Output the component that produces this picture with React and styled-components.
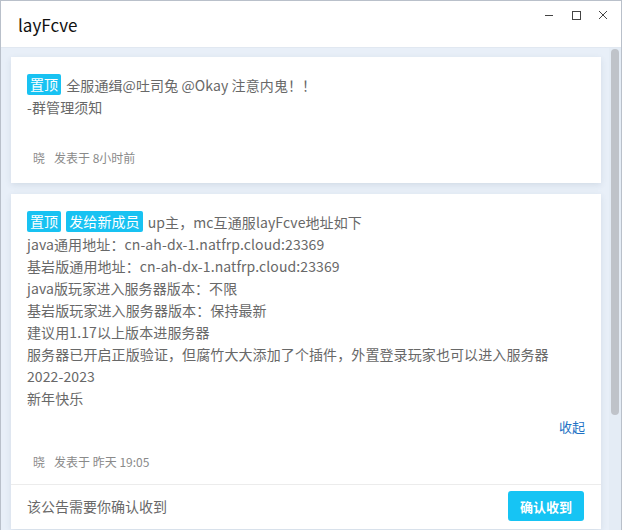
import React from "react";
import styled, { createGlobalStyle } from "styled-components";

const GlobalStyle = createGlobalStyle`
  html, body {
    margin: 0;
    padding: 0;
    background: #ffffff;
  }
  * { box-sizing: border-box; }
`;

const Window = styled.div`
  width: 622px;
  height: 530px;
  display: flex;
  flex-direction: column;
  border: 1px solid #b9c0ca;
  border-bottom: none;
  background: #ffffff;
  font-family: "Noto Sans CJK SC", "Noto Sans", sans-serif;
  overflow: hidden;
`;

const TitleBar = styled.div`
  height: 47px;
  flex-shrink: 0;
  display: flex;
  align-items: flex-start;
  justify-content: space-between;
  padding-left: 17px;
  border-bottom: 1px solid #e1e8f1;
`;

const Title = styled.div`
  font-size: 17px;
  line-height: 20px;
  margin-top: 14px;
  color: #111;
`;

const Controls = styled.div`
  display: flex;
  height: 28px;
  margin-right: 5px;
  gap: 0;
`;

const ControlButton = styled.div`
  width: 27px;
  height: 28px;
  display: flex;
  align-items: center;
  justify-content: center;
  color: #444;
`;

const Body = styled.div`
  flex: 1;
  display: flex;
  background: #e8eff8;
  overflow: hidden;
`;

const Feed = styled.div`
  flex: 1;
  display: flex;
  flex-direction: column;
  gap: 11px;
  padding: 9px 8px 0 10px;
`;

const Card = styled.div`
  background: #ffffff;
  box-shadow: 0 2px 6px rgba(60, 80, 110, 0.12);
`;

const CardMain = styled.div`
  padding: 17px 16px ${(p) => p.$bottom || 15}px 16px;
`;

const Content = styled.div`
  font-size: 14px;
  line-height: 22px;
  color: #686868;
  letter-spacing: 0.1px;
`;

const Tag = styled.span`
  display: inline-block;
  height: 21px;
  line-height: 21px;
  padding: 0 3px;
  margin-right: 5px;
  background: #18c2f2;
  color: #ffffff;
  font-size: 14px;
  border-radius: 2px;
  vertical-align: top;
`;

const Meta = styled.div`
  margin-top: ${(p) => p.$gap}px;
  padding-left: 6px;
  font-size: 12px;
  line-height: 20px;
  color: #8a8a8a;
  display: flex;
  gap: 9px;
`;

const Collapse = styled.div`
  margin-top: 8px;
  text-align: right;
  font-size: 13px;
  line-height: 20px;
  color: #1e72c4;
`;

const ConfirmBar = styled.div`
  border-top: 1px solid #ececec;
  display: flex;
  align-items: center;
  justify-content: space-between;
  padding: 6px 17px 8px 16px;
`;

const ConfirmText = styled.div`
  font-size: 14px;
  color: #686868;
`;

const ConfirmButton = styled.button`
  border: none;
  background: #16c4f4;
  color: #ffffff;
  font-family: inherit;
  font-size: 13px;
  font-weight: bold;
  height: 30px;
  width: 76px;
  border-radius: 3px;
`;

const ScrollTrack = styled.div`
  width: 12px;
  flex-shrink: 0;
  padding: 1px 2px 0 2px;
  background: #e4ecf5;
`;

const ScrollThumb = styled.div`
  height: 366px;
  background: #bfc3c9;
  border-radius: 4px;
`;

const lines = [
  "java通用地址：cn-ah-dx-1.natfrp.cloud:23369",
  "基岩版通用地址：cn-ah-dx-1.natfrp.cloud:23369",
  "java版玩家进入服务器版本：不限",
  "基岩版玩家进入服务器版本：保持最新",
  "建议用1.17以上版本进服务器",
  "服务器已开启正版验证，但腐竹大大添加了个插件，外置登录玩家也可以进入服务器",
  "2022-2023",
  "新年快乐",
];

export default function App() {
  return (
    <>
      <GlobalStyle />
      <Window>
        <TitleBar>
          <Title>layFcve</Title>
          <Controls>
            <ControlButton>
              <svg width="10" height="10" viewBox="0 0 10 10">
                <line x1="1" y1="5.5" x2="9" y2="5.5" stroke="currentColor" strokeWidth="1" />
              </svg>
            </ControlButton>
            <ControlButton>
              <svg width="10" height="10" viewBox="0 0 10 10">
                <rect x="1.5" y="1.5" width="8" height="8" fill="none" stroke="currentColor" strokeWidth="1" />
              </svg>
            </ControlButton>
            <ControlButton>
              <svg width="10" height="10" viewBox="0 0 10 10">
                <path d="M1 1 L9 9 M9 1 L1 9" stroke="currentColor" strokeWidth="1" />
              </svg>
            </ControlButton>
          </Controls>
        </TitleBar>
        <Body>
          <Feed>
            <Card>
              <CardMain>
                <Content>
                  <div>
                    <Tag>置顶</Tag>全服通缉@吐司兔 @Okay 注意内鬼！！
                  </div>
                  <div>-群管理须知</div>
                </Content>
                <Meta $gap={30}>
                  <span>晓</span>
                  <span>发表于 8小时前</span>
                </Meta>
              </CardMain>
            </Card>
            <Card>
              <CardMain $bottom={12}>
                <Content>
                  <div>
                    <Tag>置顶</Tag>
                    <Tag>发给新成员</Tag>up主，mc互通服layFcve地址如下
                  </div>
                  {lines.map((l) => (
                    <div key={l}>{l}</div>
                  ))}
                </Content>
                <Collapse>收起</Collapse>
                <Meta $gap={15}>
                  <span>晓</span>
                  <span>发表于 昨天 19:05</span>
                </Meta>
              </CardMain>
              <ConfirmBar>
                <ConfirmText>该公告需要你确认收到</ConfirmText>
                <ConfirmButton>确认收到</ConfirmButton>
              </ConfirmBar>
            </Card>
          </Feed>
          <ScrollTrack>
            <ScrollThumb />
          </ScrollTrack>
        </Body>
      </Window>
    </>
  );
}
